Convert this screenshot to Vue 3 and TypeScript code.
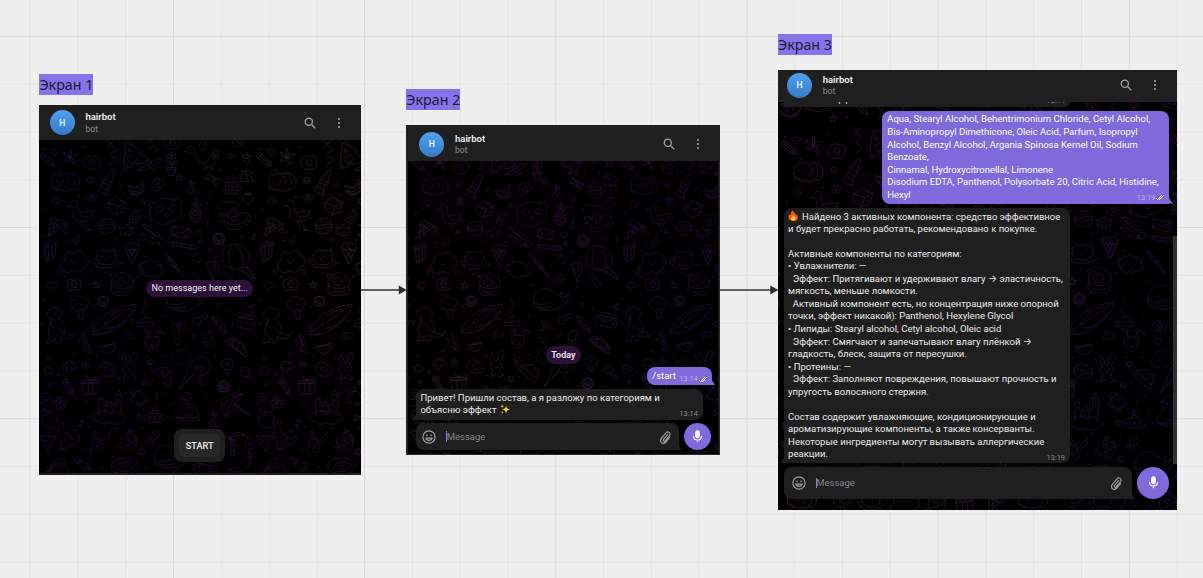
<script setup lang="ts">
interface Board {
  id: number
  title: string
  cls: string
  w: number
  h: number
  tile: number
  ox: number
  oy: number
  left: string
  mid: string
  right: string
  wash: string
  washTop: number
  washBottom: number
}

const boards: Board[] = [
  { id: 1, title: 'Экран 1', cls: 'one', w: 322, h: 336, tile: 0.3333, ox: 0, oy: 0, left: '#17163a', mid: '#1e1624', right: '#33251f', wash: '#280a38', washTop: 0, washBottom: 0.75 },
  { id: 2, title: 'Экран 2', cls: 'two', w: 315, h: 294, tile: 0.3215, ox: 3.5, oy: -15.5, left: '#33241f', mid: '#241922', right: '#15143c', wash: '#2c0d38', washTop: 0.75, washBottom: 0 },
  { id: 3, title: 'Экран 3', cls: 'three', w: 399, h: 409, tile: 0.3553, ox: 2, oy: 25, left: '#33231f', mid: '#231825', right: '#14133a', wash: '#2a0d34', washTop: 0.8, washBottom: 0 },
]

const shapes: Record<string, string> = {
  heart: 'M0 10C-18-2-9-14 0-5C9-14 18-2 0 10Z',
  star: 'M0-11L3-3L11-3L5 2L8 10L0 5L-8 10L-5 2L-11-3L-3-3Z',
  ring: 'M-9 0A9 9 0 1 0 9 0A9 9 0 1 0-9 0M-4-2A4 4 0 0 0 4 1',
  ball: 'M-24 0A24 24 0 1 0 24 0A24 24 0 1 0-24 0M-14-8A16 16 0 0 1-2-17',
  spiral: 'M0 0C4-4 8 2 3 6C-4 10-11 2-7-5C-2-13 12-11 14 0',
  pencil: 'M-7-26L7-26L7 16L0 28L-7 16ZM-7-18L7-18M-7 16L7 16M0-18L0 16',
  plant: 'M0 0C-6-12-3-20 0-26C5-18 5-9 0 0C9-10 17-12 25-9C19 0 10 4 0 0C10 5 13 15 12 21C3 17 0 9 0 0C-5 10-12 13-21 12C-18 4-9 0 0 0C-12-1-18-8-21-15C-12-15-5-9 0 0',
  egg: 'M-24 4C-30-12-10-25 5-19C22-21 29-6 22 3C25 17 9 23-3 19C-15 22-22 14-24 4ZM-9 0A9 9 0 1 0 9 0A9 9 0 1 0-9 0',
  squiggle: 'M-8-44C8-38 8-30-8-24C-16-14 18-14 6-2C-12 6-10 14 8 18C18 26-4 34-10 42M-19-34C-3-28-9-17-18-13',
  bottle: 'M-5-38L5-38L6-20C15-8 13 4 10 12L14 34C4 42-9 38-14 34L-10 12C-14 0-12-12-6-20ZM-12-4L12-4M-11 8L12 8M-12 22L12 22',
  croc: 'M-38 24L-32-40C-20-44-8-36-2-28C10-28 14-20 9-12L38 4L16 20L-8 18L-20 32ZM-26-20A5 5 0 1 0-16-20A5 5 0 1 0-26-20M-28 4L-10-8L4 6L-14 18Z',
  bug: 'M-36 8C-20-2-8 2 4-4C18-14 30-15 36-10C28-1 14 4 4 4C-8 12-24 14-36 8ZM-6 0C-10-16 2-18 7-14L3-2M2 6C-4 18 12 22 14 11',
  flower: 'M0-8C-9-24 9-24 0-8C8-22 22-13 7-3C22 0 18 15 4 5C5 22-11 20-4 5C-16 15-24 1-8-3C-22-12-10-24 0-8M-4-3A4 4 0 1 0 4-3A4 4 0 1 0-4-3M0 9L0 25M-13 25L13 25L8 48L-8 48ZM-13 31L13 31M0 20L13 13',
  spoon: 'M-4-8A9 12 0 1 1 4-8L7 26L1 29ZM0-22L0-13',
  rocket: 'M0-36C12-22 12-7 9 8L18 24L6 20L0 27L-6 20L-18 24L-9 8C-12-7-12-22 0-36ZM-5-10A5 5 0 1 0 5-10A5 5 0 1 0-5-10M-4 28L0 39L4 28M-10-18L10-18',
  paw: 'M-8 8C-9 0 8 0 9 8C8 13-7 13-8 8ZM-12-4A3 4 0 1 0-6-4A3 4 0 1 0-12-4M-3-9A3 4 0 1 0 3-9A3 4 0 1 0-3-9M6-4A3 4 0 1 0 12-4A3 4 0 1 0 6-4',
  cat: 'M-38 3C-42-12-32-23-22-20L-12-28L-5-20C14-30 38-26 43-2C45 16 35 28 22 24C11 30-8 29-19 24C-35 27-42 15-38 3ZM-26-2L-21 0M-7 0L-2-3M-17 5C-13 12-8 8-8 4M2-16C22-13 14 9 3 13M17 23C31 17 32-1 25-11M-38 16C-23 17-21 24-19 24',
  banana: 'M-24-6C-10 4 6 1 17-22L23-18C24 6 2 18-17 12ZM-20 8C-18 24 15 26 24 2M-17 15C-9 28 10 26 22 11M-15-2C-3 9 12 2 18-12',
  bean: 'M-20 4C-22-14-7-22 9-19C24-14 21 8 6 8C0 22-17 18-20 4ZM-8-3C-2-15 12-8 9 2C1 9-7 4-4-2',
  cherry: 'M-13 9A9 9 0 1 0 5 9A9 9 0 1 0-13 9M6 15A8 8 0 1 0 16 5M-3 0C0-10 0-16-5-22M12 5C6-8 2-13-5-22M-5-22C5-27 12-20 12-15C4-14 0-17-5-22',
  candy: 'M-9-9L9-9L9 9L-9 9ZM-9-4L-21-13L-21 13L-9 4M9-4L21-13L21 13L9 4M-4-9L4 9M2-9L9 4',
  mug: 'M-21-14L16-14L14 17C5 22-10 22-19 17ZM16-8C31-9 30 10 15 9M-12-3L9-3L7 9L-10 9ZM-11-18C-18-26-3-29-10-38M1-18C-6-26 9-29 3-38',
  cap: 'M-30 12L-26-18C-8-25 12-14 20 8L40 13ZM-26-18C-12-10-9 3-8 12M-14-12C-2-10 6 0 7 10',
  berry: 'M0 21C-25 8-20-13-7-14C0-10 1-10 7-14C21-12 23 9 0 21ZM-12-19L0-12L12-19M0-12L0-26M-8-4L-5-1M6-4L8 0M-2 6L1 9',
  duck: 'M-28-30C-29-45-10-43-10-27C-10-14-12-4-2-3C12-1 20-10 38-6C33 15 17 27-2 24C-22 24-28 7-22-12C-25-16-25-20-28-23L-42-18L-33-25M0 24L9 48M9 24L25 52M-5-1C1 17 22 14 31 3M15 52L32 50',
  dice: 'M-27-8L-5-26L27-9L17 19L-6 28L-26 11ZM-27-8L3 2L27-9M3 2L-6 28M-13-7L-3-17M-17 8L-12 12M8 8L13 10M14-11L8-16',
  pear: 'M10-20C20-9 17 15 3 19C-10 21-18 9-12-1C-7-10-3-9 10-20ZM-5 4C-3-6 10-3 6 6C2 14-6 11-5 4',
  panda: 'M-46 4C-48-15-37-28-25-30C-10-48 7-38 26-32C45-52 57-28 43-15C55 6 38 29 13 31C-11 50-48 27-46 4ZM-28-3C-31-17-15-24-8-15C-4-6-15 7-23 5ZM9-9C10-21 28-25 32-13C31 0 17 5 9-9ZM-3 8C3 1 14 7 7 14L0 14ZM-18-7L-15-4M19-13L22-11M-45-9C-57-25-46-36-32-26',
  pine: 'M0-18C18-21 21 15 10 26C0 35-14 28-17 13C-20-4-12-16 0-18ZM0-18C-19-22-13-33-7-31L0-20L1-43L8-22L19-29L10-14M-16 0L17 13M-17 12L10 25M-12-10L18 1M16-3L-13 17M10-15L-18 6M17 11L-5 27',
  lotus: 'M-40-2C-28-5-20 0-16 6C-17-7-10-16-1-20C8-13 11-5 9 5C18-8 31-10 43-3C39 17 23 29 0 30C-20 29-35 19-40-2ZM-42-15C-57-30-32-48-15-38M-15-38C-1-43 12-37 20-25M43-3L50 5L47 21L34 14M-8 11A8 7 0 1 0 8 11A8 7 0 1 0-8 11M-24 35C-8 49 14 45 25 34M-29 17L-49 21M28 23L44 31',
  cone: 'M-16-7C-25-21-6-28 0-20C9-33 29-17 18-5L1 33ZM-16-7L18-5M-7-5L8 16M9-5L-6 16M-2-17C-3-8 7-5 11-11',
  burger: 'M-24-4C-20-28 22-26 24-3C28 18 2 29-15 21C-25 14-28 5-24-4ZM-24-2C-11 9 11-13 24-3M-24 5C-9 17 12-1 24 5M-9-12L-6-14M6-12L9-10',
  crown: 'M-18 9L-20-11L-9-3L0-19L9-3L20-11L18 11C7 19-9 18-18 9ZM-8 6A4 4 0 1 0 0 6M5 5L9 8',
  carrot: 'M-36-26C-18-28-7-21 0-10L21 9L9 12L-17-7ZM-39 2C-17 0 5 17 17 34L1 31C-15 25-30 15-39 2ZM19 19A9 9 0 1 0 31 32A9 9 0 1 0 19 19M-25-19L5 7',
  mail: 'M-23-17L27-8L18 20L-25 10ZM-23-17L-2 6L27-8M-25 10L-9 1M18 20L5 2',
  brush: 'M-36-10L-12-8L-11 3L-37-1ZM-11-6L17-4L18 7L-11 3M18-5L35-2L35 8L18 7',
  balloon: 'M-42 8C-52-28-23-48 0-42C30-36 47-11 32 16L29 25L-13 32C-25 27-37 20-42 8ZM-15-40C-31-17-22 15-13 32M-3-42C18-22 22 5 18 28M29 25L47 42L56 63L43 58L29 45L2 33M15 32L45 59M29 27L56 62',
  fries: 'M-19-13L16-24L12 14L-10 27ZM-19-13L-15-28L-8-20L0-36L6-26L17-34L16-24M-8-13L-5 22M5-17L4 17',
  cloud: 'M-34 25C-47 14-37-1-28-3C-36-20-17-35-3-25C7-40 35-31 34-14C49-10 45 14 30 14C30 32 8 37-2 25C-12 36-26 36-34 25M-13-4L-8-7M6-7L10-4M-6 4C-2 10 3 7 4 4',
  cup: 'M-27-5C-22-22-17-27-11-20C0-23 11-22 17-16L26-27L30-8C35 15 20 24 0 22C-19 23-28 12-27-5ZM-27 5C-46 0-48 20-25 20C-43 24-25 31 0 31C28 32 49 18 37 10M-14 0L-8-3M5-3L9 0M-5 6L1 6',
  hedge: 'M-37 2L-32-6L-36-15L-25-16L-22-25L-11-22L-3-29L6-22L17-24L20-14L31-12L29-1L37 7L28 12L26 21L13 18L5 26L-4 20L-15 23L-19 14L-30 14L-27 6ZM-25 0L-20 2M-9 0L-4-3',
  pen: 'M-23-31C-9-22 5-6 11 10L28 32L24 36L8 14C-10 4-20-12-23-31ZM-18-24C-7-9-3 2 8 14M-1 4L9-2',
  pig: 'M-28 3C-34-19-19-30-9-30C-1-43 15-39 18-29C36-27 40-8 31 5C42 23 19 36 4 29C-14 38-40 24-28 3ZM-16-10A14 12 0 1 0 13-10A14 12 0 1 0-16-10M-7-10L-5-8M4-11L7-9M-25 3C-6 14 14 13 31 4M-19 18C-8 25 12 24 23 15M-24-20L-36-30L-19-33',
  badge: 'M-18-15L4-20L21-7L16 16L-16 18L-24 2ZM-10-3A8 8 0 1 0 8-3A8 8 0 1 0-10-3M-5-3L3-4M-6 10L6 9',
  tree: 'M-18 6C-35 0-28-18-17-18C-17-35 6-35 10-23C28-27 34-8 20-2C24 12 8 16 0 9C-6 14-18 14-18 6ZM-5 12L1 38L13 37L10 9M-10-7L-7-10M3-6L8-7',
  dino: 'M-26-38C-24-55-4-57 12-45C27-31 14-21 7-19C25-4 27 15 25 25C36 32 53 29 54 34C38 45 22 43 11 35L15 50L0 55L-3 38L-11 39L-10 52L-30 54L-18 34C-36 16-12-3-17-20C-27-21-31-29-26-38ZM-5-35L-2-32M-12-18C-22-4-15 8-4 9M25 25C12 28 8 6 1 2',
  surf: 'M-66 43C-61 7-15-38 62-47C60-4-13 53-66 43ZM-61 36C-34 20 22-19 53-41M-30 14C-25-11 5-29 32-32M-21 25C10 25 32 5 44-18',
  hat: 'M-27 15C-23-13 18-22 22 12C25 16 21 19-25 17ZM-20 5C-7 14 10-4 21 8M0-9C2-24-20-23-9-36C5-40 3-57-9-60M-8 5L-4 3M8 3L12 5',
  bone: 'M-17 5C-20-5-10-9-5-3L9-10C7-19 17-20 18-13C27-10 19-1 13-3L0 6C3 14-7 19-10 11C-18 12-20 8-17 5Z',
  leaf: 'M-21-25C-4-30 23-1 22 24C1 19-20-5-21-25ZM-18-20C-5-12 9 5 22 24M-9-13L-9 0M3 0L4 12',
  tape: 'M-34-9C-25-23-21-28-16-26L29-16C37-13 35-7 32 0L25 19C19 27 13 23 7 22L-27 14C-37 9-36 0-34-9ZM-20-6A8 8 0 1 0-4-3A8 8 0 1 0-20-6M8-1A8 8 0 1 0 23 3A8 8 0 1 0 8-1M-24-17L27-6',
  whale: 'M-54 14C-53-14-35-33-11-30C18-24 28 4 48-3L56-16C65-7 60 7 49 10C36 35-3 43-29 35C-45 34-51 24-54 14ZM-54 14C-32 24-6 20 5 8M-24 2L-19 2M-42 25C-27 32-9 30 4 25M42 1C30-4 34-12 29-19C41-18 48-13 48-3',
  melon: 'M-23-3L19-12C24 5 12 21-7 18C-16 16-21 7-23-3ZM-17 0L15-7M-8 7L-5 10M4 2L7 6',
  deer: 'M-20 2C-28-18-16-23-9-16L8-16C18-25 22-7 16 3C14 26-17 31-20 2ZM-9-16L-14-35L-27-39M-14-28L-5-35M8-16L19-35L31-31M15-28L8-36M-10-2L-7 1M8-2L5 1M-5 10A5 4 0 1 0 5 10A5 4 0 1 0-5 10',
  squid: 'M-15 6C-22-14 0-29 11-17C18-9 13 2 4 6C10 14 20 8 20 18M-4 8C1 22 14 16 17 24M-9 8C-8 24 5 22 7 30M-15 6C-19 17-10 22-7 26M-8-5L-5-3M4-9L7-7',
  slice: 'M-31-18C-6-38 33-16 33 30L-8 5ZM-31-18L33 30M-21-16C-1-28 27-7 29 18M-5-19L-7-2M12-15L4 8M25 0L15 17M-20-4L-6-18',
  shroom: 'M-18 4C-22-18 14-26 20-1C18 8 7 8 5 2L3 14C-4 20-12 16-9 9L-9 2ZM-8-8L-5-9M5-10L9-8',
  donut: 'M-26-2C-26-24 5-25 20-10C34 12 18 25 0 21C-17 20-26 10-26-2ZM-9-3C-4-10 12-3 10 5C1 12-8 5-9-3ZM-17-6L-13-8M4-13L9-11M15 5L19 8M-8 12L-4 15',
  bunny: 'M-13-6C-28-23-25-39-14-33L-6-11L2-12C3-36 14-51 22-38C22-22 11-15 10-9C24 6 7 17 6 24L22 34L8 40L-3 31L-19 40L-13 18C-25 13-25-1-13-6ZM-8 1L-5 4M6 0L4 4M-5 11L3 10',
  boat: 'M-38-33L-26-38L-5-11C9-18 24-17 31-3L42 0L29 41C1 25-23 2-38-33ZM-38-33C-14-9 4 9 32 27M-31-24L-23-29M-4-11L19 14L30-3M-16-5L-9-10',
  racket: 'M-60 49C-36 10-31-40 0-50C38-54 46-6 11 6C-3 8-12-1-20 9L-60 49M-40 26C-18 6-9-12-4-26M11 6C-6 25 2 34 16 37M-7-14C-3-24 14-24 12-12C7 1-8-3-7-14',
  bulb: 'M-17-3C-21-25 15-29 18-8C19 8 8 7 6 21L-5 19C-7 10-16 7-17-3ZM-10 9L8 11M-5 19L1 28L7 21M-2-12L4-2L-4-5',
  lens: 'M-20-12A14 14 0 1 0 8-12A14 14 0 1 0-20-12M4-2L30 18L26 23L0 5M-13-16C-8-23-1-19 0-15',
  gift: 'M-24-10L23-14L22 20L-20 24ZM-27-17L25-20L23-11L-25-8ZM-7-8L-5 22M8-9L8 21M0-18C-19-27-21-33-10-32L0-20C9-35 22-33 19-25C14-20 7-20 0-18',
  castle: 'M-30-10L-33-34L-25-42L-16-34L-18-16L-7-16L-7-26L6-26L6-16L21-17L20-48L29-64L38-48L35 6M-30-10L-29 13M-33-34L-16-34M20-48L38-48M-13 7L-13-7C-7-17 7-17 10-6L10 7M-48 25C-59 13-43-1-29 8C-26-6-2 4 0 11C17-3 31 3 34 13C57 12 54 30 38 31C31 44 8 43 0 34C-11 46-28 40-29 31C-34 33-43 32-48 25M-25-25L-25-18M29-36L29-28M-8 0L3 2',
  bell: 'M-24 3C-14-1-18-17-3-19C12-20 14-3 20 3L24 11L-1 20L-25 11ZM-1 20L4 28L12 17M-18-7C-28-18-20-25-12-22M-3-19L-4-26M-9-7L-6-9',
  swan: 'M-17-34C-15-50 12-49 12-34C13-20-11-13 1 3C19-8 34 9 31 29L-34 30C-44 19-23 5-16-3C-25-17-7-19-3-25L-24-28ZM-34 30C-20 42 18 40 31 29M-14 15C0 27 17 22 22 12M-1-35L2-33',
  umbrella: 'M-42 4C-42-36-7-43 22-35L-29 34C-38 26-42 15-42 4ZM22-35C2-29-24-12-29 34M22-35C-17-26-32-10-42 4M-8-5L37 29C41 20 44 23 43 30M-4-7L40 26',
  bloom: 'M0-5C-13-22 10-24 4-7C23-17 27 2 8 1C24 11 11 24 0 8C-5 25-21 15-7 3C-26 4-25-14-8-5C-18-21-4-23 0-5M-4 0A4 4 0 1 0 4 0A4 4 0 1 0-4 0',
  moon: 'M-26-37C-14-20-14 0 4 9C18 16 22 4 32-1C35 21 17 36 0 30L-8 41L-26 42L-24 19C-41-6-35-25-26-37ZM-16 14L-4 25M-18 30L-10 34M-5-4L1-1M11-12L22-16L18-3M25-28L37-31L32-19M34-41L45-45L41-34',
  sub: 'M-35-2C-25-19 24-19 36-1C25 18-22 18-35-2ZM-8-14L-7-23L8-23L9-14M-2-23L-2-34L7-34M-20-1A4 4 0 1 0-12-1A4 4 0 1 0-20-1M-4-1A4 4 0 1 0 4-1A4 4 0 1 0-4-1M12-1A4 4 0 1 0 20-1A4 4 0 1 0 12-1M-35-2L-50-10L-49 8Z',
  pizza: 'M-23-20L25-16C26-9 21-9 19-10L2 29L-20-14C-26-13-27-18-23-20ZM-8-7A4 4 0 1 0 0-7M6-4L11-4M-1 7L4 8',
  guitar: 'M-15 31C-32 25-21 8-13 7C-24-7-9-22-2-10C8-15 10-4 6 3C22 13 9 35-2 26M-2-10L-17-33L-10-37L6-11M8-3L32-29L37-21L12 4M-8 11A5 5 0 1 0 2 11A5 5 0 1 0-8 11M32-29L39-35',
  planet: 'M-24 0A25 25 0 1 0 26 0A25 25 0 1 0-24 0M-29 12C-42 27-5 14 25-8C35-21 17-16 15-17M-9-8A7 7 0 1 0 5-8A7 7 0 1 0-9-8M-3 11L2 13M12 2L16 5M-4-25L0-37L14-32L2-29',
  palm: 'M-4-5C-20-27-44-15-45-5C-28-11-18-6-4-5C-20 6-21 18-18 23C-8 15-4 5-4-5C4-28 32-26 42-14C22-16 9-12-4-5C16 0 22 11 20 20C9 12 3 4-4-5M-4-3C1 19 0 36-5 52M3 0C11 21 9 37 6 52M-2 16L9 18M0 30L9 31',
  snail: 'M-34 17C-12 20-23-4-12-15C3-31 30-15 21 4C35 8 35 20 26 23L-19 23M-12 10C-18-6 13-15 13 2C11 13-4 12-3 2C0-4 7-1 5 2M-27 14L-34 2M-22 12L-24 1',
  eye: 'M-40 5C-44-21-17-30-5-23C15-33 41-19 40 0C29 32-24 29-40 5ZM-28 2C-13-16 13-20 31-4C15 20-11 21-28 2M0 10C-13 0-5-9 1-3C8-10 16 0 0 10Z',
  pepper: 'M33-30C38-14 29 18-2 23C-17 26-26 17-35 18C-19 9-10 14 1 3C14-9 11-20 20-25C22-31 28-31 33-30ZM20-25L25-18L33-22M28-31L29-41',
  dot: 'M-2 0A2 2 0 1 0 2 0A2 2 0 1 0-2 0',
}

type Placed = [string, number, number, number?, number?]
const doodles: Placed[] = [
  ['pencil', 27, 60, 1, -50], ['heart', 47, 37], ['plant', 94, 52], ['egg', 160, 68], ['squiggle', 222, 35], ['bottle', 205, 125, 1, 28],
  ['croc', 292, 52], ['bug', 332, 75, 1, -12], ['flower', 398, 58], ['spoon', 466, 45, 1, -35], ['heart', 492, 20, 1.1], ['rocket', 518, 60, 1, 35],
  ['spiral', 575, 50, 0.8], ['paw', 622, 52, 1.1], ['cat', 78, 125], ['ring', 153, 121], ['spiral', 240, 137, 0.7], ['banana', 292, 142],
  ['bean', 358, 137], ['star', 421, 113], ['cherry', 457, 145, 0.9], ['candy', 520, 118, 0.9, 30], ['mug', 580, 142], ['cap', 635, 112],
  ['berry', 627, 175, 0.9], ['bean', 52, 184, 0.7], ['bloom', 158, 175, 0.75], ['duck', 126, 220], ['dice', 235, 197], ['pear', 285, 230],
  ['ring', 314, 185, 0.8], ['panda', 380, 215], ['pine', 470, 218], ['heart', 513, 170, 0.7, 20], ['brush', 507, 243, 0.5, 90],
  ['lotus', 585, 225], ['cone', 45, 258, 1, 30], ['cherry', 78, 266, 0.7], ['burger', 204, 257], ['crown', 262, 270], ['pear', 110, 300, 0.7],
  ['carrot', 345, 280], ['mail', 425, 275], ['heart', 480, 278, 0.9, -20], ['brush', 438, 318], ['ring', 540, 297, 1.8], ['star', 486, 306, 0.8],
  ['star', 648, 291, 0.8], ['spiral', 610, 292, 0.7], ['balloon', 593, 355], ['fries', 35, 338], ['cloud', 105, 365], ['cup', 200, 352],
  ['cone', 278, 336, 1.1], ['hedge', 337, 387], ['pen', 407, 376], ['bell', 475, 353, 0.65], ['bean', 465, 420, 0.9], ['cap', 523, 390, 0.9, 70],
  ['spiral', 146, 396, 0.8], ['pear', 59, 393, 0.6], ['pig', 247, 435], ['badge', 107, 433], ['star', 172, 435, 1.1], ['shroom', 39, 438, 0.8],
  ['bottle', 575, 420, 0.65, -40], ['whale', 438, 475], ['tree', 122, 500], ['dino', 52, 555], ['ring', 192, 484, 1.6], ['surf', 227, 540],
  ['hat', 322, 543], ['badge', 420, 560, 0.85], ['bone', 482, 540, 1.1], ['leaf', 540, 555], ['tape', 617, 545], ['candy', 648, 500, 0.8, -30],
  ['spiral', 537, 497, 0.7], ['carrot', 142, 610, 0.7, 30], ['melon', 207, 622], ['squid', 277, 588, 0.7, 90], ['deer', 340, 608], ['heart', 414, 604],
  ['spiral', 464, 592, 0.7], ['squid', 510, 597], ['slice', 590, 620], ['spiral', 28, 655, 0.8], ['shroom', 92, 680], ['bloom', 140, 676, 0.7],
  ['donut', 204, 687], ['bunny', 272, 680], ['boat', 362, 697], ['cloud', 425, 652, 0.75], ['racket', 480, 700], ['bulb', 565, 678], ['lens', 625, 708],
  ['shroom', 27, 694, 0.8, 20], ['star', 33, 735, 0.7], ['pencil', 89, 742, 1, -28], ['gift', 154, 740], ['heart', 142, 788, 0.7], ['ring', 316, 727],
  ['ring', 554, 740, 1.8], ['spiral', 555, 740, 0.8], ['bloom', 64, 790], ['bean', 16, 776, 0.9], ['castle', 210, 812], ['bell', 300, 773],
  ['brush', 353, 768, 0.35, 80], ['brush', 395, 796, 0.4, -45], ['swan', 446, 803], ['umbrella', 590, 797], ['ball', 32, 840], ['moon', 90, 885],
  ['sub', 347, 834], ['cherry', 524, 842], ['guitar', 178, 910], ['planet', 267, 906], ['pizza', 27, 907], ['whale', 400, 945], ['palm', 578, 900],
  ['squid', 345, 890, 0.8, 40], ['pear', 630, 910, 0.9, -40], ['snail', 57, 978], ['rocket', 130, 972, 0.8, -55], ['eye', 257, 980], ['ring', 308, 936],
  ['tape', 500, 985], ['pepper', 602, 972], ['bone', 400, 1005], ['cat', 60, 1045], ['duck', 170, 1050, 0.8], ['cup', 255, 1050, 0.85],
  ['cloud', 350, 1060], ['planet', 440, 1060], ['gift', 520, 1065], ['cone', 600, 1055, 1, 25], ['lotus', 60, 1130, 0.8], ['panda', 170, 1140, 0.8],
  ['bottle', 250, 1140, 0.8, 40], ['pig', 330, 1150], ['rocket', 410, 1150], ['donut', 485, 1150], ['swan', 570, 1150], ['melon', 30, 1280, 1.5],
  ['cat', 105, 1270, 0.9], ['carrot', 65, 1205], ['squid', 165, 1230], ['spiral', 200, 1195], ['leaf', 225, 1280], ['crown', 250, 1220],
  ['squiggle', 285, 1275], ['flower', 345, 1270], ['bean', 400, 1220], ['mail', 455, 1270], ['bug', 520, 1215], ['pepper', 560, 1285], ['bunny', 620, 1240],
  ['star', 150, 1315], ['ring', 440, 1320], ['egg', 400, 8], ['berry', 335, 12, 0.7], ['bean', 600, 6, 0.9], ['heart', 12, 550, 0.6],
]
const dots: [number, number][] = [
  [14, 27], [135, 20], [60, 90], [258, 85], [355, 30], [440, 35], [545, 90], [590, 85], [120, 170], [205, 165], [255, 165], [405, 175], [505, 190],
  [650, 228], [335, 240], [20, 210], [165, 235], [20, 290], [85, 302], [150, 270], [230, 300], [300, 300], [400, 308], [510, 330], [320, 350], [248, 370],
  [375, 340], [530, 350], [75, 410], [200, 400], [295, 410], [380, 435], [520, 440], [15, 480], [165, 500], [160, 560], [280, 540], [370, 530], [375, 580],
  [450, 570], [570, 510], [580, 560], [110, 580], [105, 640], [175, 650], [240, 655], [325, 650], [370, 650], [500, 640], [530, 650], [60, 705], [180, 715],
  [240, 715], [340, 720], [420, 745], [600, 750], [15, 810], [110, 770], [260, 760], [380, 760], [500, 765], [540, 780], [75, 850], [150, 860], [230, 865],
  [310, 865], [400, 835], [480, 840], [520, 890], [70, 930], [140, 930], [220, 950], [320, 980], [190, 980], [535, 940], [20, 1000], [100, 1090], [300, 1100],
  [400, 1110], [610, 1110], [130, 1200], [320, 1210], [500, 1180], [190, 1310],
]

const outgoing: string[] = [
  'Aqua, Stearyl Alcohol, Behentrimonium Chloride, Cetyl Alcohol,',
  'Bis-Aminopropyl Dimethicone, Oleic Acid, Parfum, Isopropyl',
  'Alcohol, Benzyl Alcohol, Argania Spinosa Kernel Oil, Sodium',
  'Benzoate,',
  'Cinnamal, Hydroxycitronellal, Limonene',
  'Disodium EDTA, Panthenol, Polysorbate 20, Citric Acid, Histidine,',
  'Hexyl',
]
const analysis: string[] = [
  'Найдено 3 активных компонента: средство эффективное',
  'и будет прекрасно работать, рекомендовано к покупке.',
  '',
  'Активные компоненты по категориям:',
  '• Увлажнители: —',
  '  Эффект: Притягивают и удерживают влагу → эластичность,',
  'мягкость, меньше ломкости.',
  '  Активный компонент есть, но концентрация ниже опорной',
  'точки, эффект никакой): Panthenol, Hexylene Glycol',
  '• Липиды: Stearyl alcohol, Cetyl alcohol, Oleic acid',
  '  Эффект: Смягчают и запечатывают влагу плёнкой →',
  'гладкость, блеск, защита от пересушки.',
  '• Протеины: —',
  '  Эффект: Заполняют повреждения, повышают прочность и',
  'упругость волосяного стержня.',
  '',
  'Состав содержит увлажняющие, кондиционирующие и',
  'ароматизирующие компоненты, а также консерванты.',
  'Некоторые ингредиенты могут вызывать аллергические',
  'реакции.',
]

const gridX = Array.from({ length: 25 }, (_, i) => ({ at: 30.1 + i * 47.79, major: i % 4 === 3 }))
const gridY = Array.from({ length: 12 }, (_, i) => ({ at: 36.4 + i * 47.79, major: i % 4 === 0 }))
</script>

<template>
  <main class="canvas">
    <svg class="wires" width="1203" height="578" aria-hidden="true">
      <line v-for="g in gridX" :key="'x' + g.at" :x1="g.at" :x2="g.at" y1="0" y2="578" :class="g.major ? 'major' : 'minor'" />
      <line v-for="g in gridY" :key="'y' + g.at" x1="0" x2="1203" :y1="g.at" :y2="g.at" :class="g.major ? 'major' : 'minor'" />
      <path class="arrow" d="M361 290H400M720 290H772" />
      <path class="tip" d="M398.8 285.6L406.8 290L398.8 294.4ZM770.3 285.6L778.3 290L770.3 294.4Z" />
    </svg>

    <section v-for="b in boards" :key="b.id" class="board" :class="b.cls">
      <h2 class="label">{{ b.title }}</h2>
      <div class="phone">
        <header class="bar">
          <span class="avatar">H</span>
          <div class="who"><strong>hairbot</strong><small>bot</small></div>
          <svg class="search" viewBox="0 0 12 12"><circle cx="4.8" cy="4.8" r="3.6" /><path d="M7.5 7.5L11.2 11.2" /></svg>
          <svg class="more" viewBox="0 0 4 12"><circle cx="2" cy="2" r="1.1" /><circle cx="2" cy="6" r="1.1" /><circle cx="2" cy="10" r="1.1" /></svg>
        </header>
        <div class="chat">
          <svg class="paper" :width="b.w" :height="b.h" aria-hidden="true">
            <defs>
              <pattern :id="'tile' + b.id" width="650" height="1338" patternUnits="userSpaceOnUse" :patternTransform="`translate(${b.ox} ${b.oy}) scale(${b.tile})`">
                <g class="ink">
                  <path v-for="(d, i) in doodles" :key="i" :d="shapes[d[0]]" :transform="`translate(${d[1]} ${d[2]}) rotate(${d[4] ?? 0}) scale(${d[3] ?? 1})`" />
                  <path v-for="(p, i) in dots" :key="'d' + i" :d="shapes.dot" :transform="`translate(${p[0]} ${p[1]})`" />
                </g>
              </pattern>
              <mask :id="'mask' + b.id"><rect width="100%" height="100%" :fill="`url(#tile${b.id})`" /></mask>
              <linearGradient :id="'side' + b.id">
                <stop offset="0" :stop-color="b.left" /><stop offset="0.45" :stop-color="b.mid" /><stop offset="1" :stop-color="b.right" />
              </linearGradient>
              <linearGradient :id="'wash' + b.id" x2="0" y2="1">
                <stop offset="0" :stop-color="b.wash" :stop-opacity="b.washTop" /><stop offset="1" :stop-color="b.wash" :stop-opacity="b.washBottom" />
              </linearGradient>
            </defs>
            <g :mask="`url(#mask${b.id})`">
              <rect width="100%" height="100%" :fill="`url(#side${b.id})`" />
              <rect width="100%" height="100%" :fill="`url(#wash${b.id})`" />
            </g>
          </svg>

          <template v-if="b.id === 1">
            <span class="pill empty">No messages here yet...</span>
            <button class="start"><span>START</span></button>
          </template>

          <template v-else>
            <template v-if="b.id === 2">
              <span class="pill today">Today</span>
              <div class="msg out short">
                <p>/start</p>
                <span class="time">13:14<svg viewBox="0 0 10 7"><path d="M.8 4L2.6 5.8L6.8 1M4.4 5.8L9 1" /></svg></span>
              </div>
              <div class="msg in hello">
                <p>Привет! Пришли состав, а я разложу по категориям и</p>
                <p>объясню эффект <svg class="spark" viewBox="0 0 12 12"><path d="M7 1.5C7.6 4.8 8.2 5.6 11.6 6.3C8.2 7 7.6 7.8 7 11.2C6.3 7.8 5.6 7 2.4 6.3C5.6 5.6 6.3 4.8 7 1.5Z" /><path d="M2.4.3L3 2L4.6 2.5L3 3L2.4 4.8L1.8 3L.2 2.5L1.8 2ZM2.6 8L3 9.3L4.2 9.7L3 10.1L2.6 11.5L2.2 10.1L1 9.7L2.2 9.3Z" /></svg></p>
                <span class="time">13:14</span>
              </div>
            </template>

            <template v-else>
              <div class="msg in previous"><p>объясню эффект <i class="speck"></i></p><span class="time">13:14</span></div>
              <div class="msg out list">
                <p v-for="line in outgoing" :key="line">{{ line }}</p>
                <span class="time">13:19<svg viewBox="0 0 10 7"><path d="M.8 4L2.6 5.8L6.8 1M4.4 5.8L9 1" /></svg></span>
              </div>
              <div class="msg in report">
                <p v-for="(line, i) in analysis" :key="i"><svg v-if="i === 0" class="fire" viewBox="0 0 12 13"><path fill="#f4511e" d="M5.4.3C6 2.7 9 4 9.4 6.2C9.9 5.8 10 5 9.9 4.4C11.5 6 12 8.6 10.7 10.7C9.4 13 3.2 13.4 1.3 10.6C0 8.5.6 6 2.2 4.5C2.3 5.3 2.6 5.8 3.1 6C3 3.7 3.8 1.5 5.4.3Z" /><path fill="#ffca28" d="M6 5.7C6.4 7.1 8.8 7.7 8.8 10C8.8 12.9 3.4 13 3.2 10C3.2 9 3.7 8.3 4.3 7.9C4.4 8.4 4.6 8.7 5 8.8C4.9 7.6 5.2 6.5 6 5.7Z" /></svg>{{ line }}</p>
                <span class="time">13:19</span>
              </div>
              <i class="scroll"></i>
            </template>

            <footer class="compose">
              <div class="field">
                <svg class="smile" viewBox="0 0 14 14"><circle cx="7" cy="7" r="6.1" /><path d="M3.9 8.2C4.5 11 9.5 11 10.1 8.2Z" /><circle class="eye" cx="4.9" cy="5.4" r=".8" /><circle class="eye" cx="9.1" cy="5.4" r=".8" /></svg>
                <span class="caret"></span><span class="hint">Message</span>
                <svg class="clip" viewBox="0 0 12 14"><path d="M8.9 4.2L4.7 9.3C3.6 10.8 5.3 12 6.4 10.7L10.4 5.7C12.3 3.1 9.1.4 7 2.8L2.4 8.4C-.2 12 4 15.1 6.8 12L10.8 7.1" /></svg>
              </div>
              <span class="mic"><svg viewBox="0 0 12 14"><rect x="3.9" y="0.6" width="4.2" height="8" rx="2.1" /><path d="M1.6 6.4C1.6 12.2 10.4 12.2 10.4 6.4M6 10.7V13.4" /></svg></span>
            </footer>
          </template>
        </div>
      </div>
    </section>
  </main>
</template>

<style>
body { margin: 0; background: #efefef; overflow: hidden; }
</style>

<style scoped>
.canvas { position: relative; width: 1203px; height: 578px; overflow: hidden; background: #efefef; font-family: Roboto, Inter, "Noto Sans", sans-serif; }
.wires { position: absolute; inset: 0; }
.minor { stroke: #e4e4e4; stroke-width: 1; }
.major { stroke: #dadada; stroke-width: 1; }
.arrow { stroke: #333; stroke-width: 1.3; }
.tip { fill: #2e2e2e; }
.board { position: absolute; display: flex; flex-direction: column; align-items: flex-start; }
.one { left: 39.4px; top: 74.3px; width: 321.6px; --bar: 34.7px; }
.two { left: 406.3px; top: 89.3px; width: 314.2px; --bar: 36.5px; }
.three { left: 778px; top: 34px; width: 399px; --bar: 32.5px; }
.label { margin: 0; height: 20.5px; background: #8573ea; color: #1b1830; font: 400 14.25px/21.6px "Noto Sans", sans-serif; white-space: nowrap; }
.phone { margin-top: 10.3px; width: 100%; height: 369.6px; display: flex; flex-direction: column; overflow: hidden; background: #000; box-sizing: border-box; }
.two .phone { margin-top: 14.8px; height: 330.4px; box-shadow: inset 2px 0 #242424, inset -1.5px -1px #2b2b2b; }
.three .phone { margin-top: 15.2px; height: 440.3px; }
.one .phone { border-bottom: 2px solid #202020; }
.bar { flex: none; height: var(--bar); background: #1f1f1f; display: flex; align-items: center; box-sizing: border-box; padding: 1px 20px 0 10.3px; }
.two .bar { padding: 3px 20.5px 0 13px; }
.three .bar { padding: 0 19.6px 1px 9px; }
.avatar { width: 25px; height: 25px; border-radius: 50%; background: linear-gradient(#4da2f2, #357ac6); color: #fff; font-size: 8.5px; font-weight: 500; display: grid; place-items: center; }
.who { margin-left: 10.7px; flex: 1; display: flex; flex-direction: column; color: #f2f2f2; }
.who strong { font-size: 9.5px; line-height: 11.5px; font-weight: 600; }
.who small { font-size: 8.7px; line-height: 12px; color: #8c8c8c; }
.search { width: 12px; height: 12px; fill: none; stroke: #a4a4a4; stroke-width: 1.25; margin-right: 21px; }
.more { width: 4px; height: 12px; fill: #a4a4a4; }
.chat { flex: 1; position: relative; display: flex; flex-direction: column; min-height: 0; }
.paper { position: absolute; left: 0; top: 0; z-index: 0; }
.two .paper { clip-path: inset(0 2px 1px 2px); }
.ink { fill: none; stroke: #fff; stroke-width: 2.6; stroke-linecap: round; stroke-linejoin: round; }
.pill { position: relative; align-self: center; background: #2c1038; color: #f1ebf4; border-radius: 9px; text-align: center; box-sizing: border-box; white-space: nowrap; }
.empty { margin: 139.8px 1px 0 0; width: 107.5px; height: 17.6px; font-size: 9.02px; line-height: 17.6px; }
.start { position: relative; align-self: center; margin: 132.2px 1px 0 0; padding: 4.5px; width: 50.5px; height: 32.5px; border: 0; border-radius: 8px; background: #1f1f1f; display: flex; font: 500 9.2px Roboto, sans-serif; color: #eee; }
.start span { flex: 1; align-self: stretch; display: grid; place-items: center; background: #282828; border-radius: 5px; }
.today { margin-top: 185px; width: 35.3px; height: 17.6px; font-size: 9px; line-height: 18.6px; font-weight: 600; }
.msg { position: relative; box-sizing: border-box; color: #ececec; font-size: 9.53px; line-height: 12.56px; border-radius: 8px; padding: 2.5px 5px; }
.msg p { margin: 0; height: 12.56px; white-space: pre; }
.in { background: #1f1f1f; }
.out { background: #7e6adb; color: #fff; align-self: flex-end; border-bottom-right-radius: 0; }
.in { border-bottom-left-radius: 0; align-self: flex-start; }
.out::after, .in::before { content: ""; position: absolute; bottom: 0; width: 4px; height: 6px; }
.out::after { right: -3.3px; background: #7e6adb; clip-path: polygon(0 0, 100% 100%, 0 100%); }
.in::before { left: -3.3px; background: #1f1f1f; clip-path: polygon(100% 0, 100% 100%, 0 100%); }
.time { position: absolute; right: 5px; bottom: .6px; font-size: 7.4px; line-height: 10px; color: #8d8d8d; display: flex; align-items: center; }
.out .time { color: #c1b5ef; right: 4px; }
.time svg { width: 10px; height: 7px; fill: none; stroke: #fff; stroke-width: 1; margin-left: 0; }
.short { margin: 3.8px 8.7px 0 0; width: 64.6px; height: 17.5px; }
.hello { margin: 4.3px 0 0 9.5px; width: 287px; height: 30.4px; padding-left: 4.6px; }
.spark { width: 10.5px; height: 10.5px; fill: #fcc934; vertical-align: -1.5px; margin-left: .8px; }
.previous { margin-left: 5.5px; width: 286.5px; height: 4.8px; padding-top: 0; border-radius: 0 0 8px 0; overflow: hidden; }
.previous p { margin-top: -9.5px; padding-left: 0; }
.previous .time { bottom: 1.2px; }
.speck { display: inline-block; width: 4px; height: 1.5px; background: #b9862e; }
.list { margin: 4px 7.8px 0 0; width: 287px; height: 92.6px; }
.report { margin: 4px 0 0 5.5px; width: 286.5px; height: 255.7px; padding-left: 4.6px; }
.fire { width: 10.5px; height: 11.5px; margin-right: 3.4px; vertical-align: -2px; }
.scroll { position: absolute; right: 0; top: 134px; width: 3.7px; height: 228px; background: #303030; }
.compose { position: relative; display: flex; align-items: center; margin: 3.3px 9px 0 9.7px; height: 27.4px; }
.field { flex: 1; height: 100%; position: relative; display: flex; align-items: center; box-sizing: border-box; padding: 0 7.5px 0 6.5px; background: #1f1f1f; border-radius: 8px 8px 0 8px; }
.field::after { content: ""; position: absolute; right: -3.3px; bottom: 0; width: 4px; height: 6px; background: #1f1f1f; clip-path: polygon(0 0, 100% 100%, 0 100%); }
.smile { width: 14px; height: 14px; fill: none; stroke: #a0a0a0; stroke-width: 1.2; }
.smile .eye { fill: #a0a0a0; stroke: none; }
.caret { width: 1px; height: 10.5px; margin-left: 9.7px; background: #8c77f2; }
.hint { flex: 1; font-size: 9.5px; color: #7f868e; margin-left: -.5px; }
.clip { width: 12px; height: 14px; fill: none; stroke: #9c9c9c; stroke-width: 1.2; }
.mic { width: 27.4px; height: 27.4px; margin-left: 5.5px; border-radius: 50%; background: #7e6adb; display: grid; place-items: center; }
.mic svg { width: 11px; height: 13px; fill: #fff; stroke: #fff; stroke-width: 1; }
.mic path { fill: none; stroke-width: 1.2; }
.three .compose { margin: 3.7px 8px 0 5.5px; height: 32px; }
.three .field { padding: 0 10px 0 8.5px; }
.three .mic { width: 32px; height: 32px; }
</style>
